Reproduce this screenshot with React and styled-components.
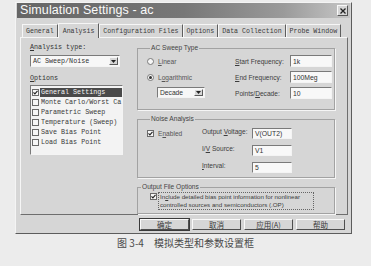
import React from 'react';
import styled, { createGlobalStyle } from 'styled-components';

const GlobalStyle = createGlobalStyle`
  html, body {
    margin: 0;
    padding: 0;
  }
  body {
    width: 371px;
    height: 266px;
    overflow: hidden;
    background: #ececec;
    font-family: "Liberation Sans", Arial, sans-serif;
    color: #2e2e2e;
  }
`;

const Page = styled.div`
  display: flex;
  flex-direction: column;
  align-items: flex-start;
  padding-top: 2px;
`;

const Dialog = styled.div`
  box-sizing: border-box;
  width: 337px;
  margin-left: 15px;
  background: #d6d6d6;
  border: 1px solid;
  border-color: #f4f4f4 #5c5c5c #5c5c5c #f4f4f4;
  display: flex;
  flex-direction: column;
`;

const TitleBar = styled.div`
  height: 15px;
  margin: 0 1px;
  display: flex;
  align-items: center;
  justify-content: space-between;
  padding: 0 2px 0 3px;
  background: linear-gradient(90deg, #666 0%, #777 50%, #9a9a9a 80%, #c6c6c6 100%);
`;

const Title = styled.span`
  color: #fafafa;
  font-size: 12.5px;
  line-height: 15px;
  letter-spacing: 0.1px;
`;

const CloseButton = styled.div`
  box-sizing: border-box;
  width: 11px;
  height: 11px;
  background: #d6d6d6;
  border: 1px solid;
  border-color: #f8f8f8 #555 #555 #f8f8f8;
  display: flex;
  align-items: center;
  justify-content: center;
`;

const TabStrip = styled.div`
  height: 15px;
  margin-top: 4px;
  padding-left: 6px;
  display: flex;
  align-items: flex-end;
  position: relative;
  z-index: 1;
`;

const Tab = styled.div`
  box-sizing: border-box;
  flex: none;
  height: ${p => (p.$active ? 15 : 13)}px;
  margin-bottom: ${p => (p.$active ? -1 : 0)}px;
  padding: 0 ${p => (p.$active ? 4 : 3)}px;
  display: flex;
  align-items: center;
  font-family: "Liberation Mono", "DejaVu Sans Mono", monospace;
  font-size: 6.6px;
  white-space: nowrap;
  color: #3a3a3a;
  background: #d6d6d6;
  border-top: 1px solid #f6f6f6;
  border-left: 1px solid #f6f6f6;
  border-right: 1px solid #5e5e5e;
`;

const Panel = styled.div`
  box-sizing: border-box;
  height: 178px;
  margin: 0 3px 0 4px;
  padding: 5px 0 0 9px;
  border: 1px solid;
  border-color: #f6f6f6 #6e6e6e #6e6e6e #f6f6f6;
  display: grid;
  grid-template-columns: 93px 198px;
  column-gap: 14px;
  align-items: start;
`;

const LeftCol = styled.div`
  display: flex;
  flex-direction: column;
`;

const MonoLabel = styled.div`
  font-family: "Liberation Mono", "DejaVu Sans Mono", monospace;
  font-size: 6.7px;
  line-height: 8px;
  height: 8px;
  margin-top: ${p => p.$gap || 0}px;
  color: #333;
  white-space: nowrap;
`;

const Combo = styled.div`
  box-sizing: border-box;
  width: ${p => p.$w}px;
  height: ${p => p.$h}px;
  margin-top: ${p => p.$gap || 0}px;
  margin-left: ${p => p.$indent || 0}px;
  background: #f7f7f7;
  border: 1px solid;
  border-color: #7a7a7a #f4f4f4 #f4f4f4 #7a7a7a;
  display: flex;
  align-items: center;
  padding: 1px 1px 1px 2px;
`;

const ComboText = styled.span`
  flex: 1;
  font-family: ${p => (p.$mono ? '"Liberation Mono", monospace' : '"Liberation Sans", Arial, sans-serif')};
  font-size: 6.7px;
  color: #333;
  white-space: nowrap;
`;

const DropButton = styled.div`
  box-sizing: border-box;
  width: 9px;
  height: 100%;
  background: #d6d6d6;
  border: 1px solid;
  border-color: #f6f6f6 #5a5a5a #5a5a5a #f6f6f6;
  display: flex;
  align-items: center;
  justify-content: center;
`;

const ListBox = styled.div`
  box-sizing: border-box;
  width: 93px;
  height: 70px;
  margin-top: 3px;
  padding: 1px 0 0 1px;
  background: #f3f3f3;
  border: 1px solid;
  border-color: #7a7a7a #f4f4f4 #f4f4f4 #7a7a7a;
  display: flex;
  flex-direction: column;
  overflow: hidden;
`;

const ListRow = styled.div`
  height: 10px;
  display: flex;
  align-items: center;
  gap: 1px;
`;

const CheckBox = styled.div`
  box-sizing: border-box;
  flex: none;
  width: 7px;
  height: 7px;
  margin-top: ${p => p.$top || 0}px;
  background: #f7f7f7;
  border: 1px solid #6a6a6a;
  display: flex;
  align-items: center;
  justify-content: center;
`;

const ListText = styled.span`
  flex: 1;
  height: 9px;
  line-height: 9px;
  padding-left: 1px;
  font-family: "Liberation Mono", "DejaVu Sans Mono", monospace;
  font-size: 6.7px;
  white-space: nowrap;
  color: ${p => (p.$selected ? '#f4f4f4' : '#3a3a3a')};
  background: ${p => (p.$selected ? '#4a4a4a' : 'transparent')};
`;

const RightCol = styled.div`
  margin-top: 1px;
  display: flex;
  flex-direction: column;
  gap: 5px;
`;

const Group = styled.fieldset`
  box-sizing: border-box;
  height: ${p => p.$h}px;
  margin: 0;
  padding: ${p => p.$pad};
  border: 1px solid #a2a2a2;
  box-shadow: 1px 1px 0 #f5f5f5;
  min-width: 0;
`;

const Legend = styled.legend`
  margin-left: 3px;
  padding: 0 1px;
  font-size: 6.6px;
  line-height: 8px;
  color: #444;
`;

const SweepGrid = styled.div`
  display: grid;
  grid-template-columns: 88px auto;
  grid-auto-rows: 12px;
  row-gap: 4px;
`;

const NoiseGrid = styled.div`
  display: grid;
  grid-template-columns: 55px 50px 40px;
  grid-auto-rows: 11px;
  row-gap: 6px;
`;

const Option = styled.div`
  display: flex;
  align-items: center;
  gap: 4px;
  font-size: 6.6px;
  color: #555;
  white-space: nowrap;
`;

const Radio = styled.div`
  box-sizing: border-box;
  width: 7px;
  height: 7px;
  border-radius: 50%;
  background: #f7f7f7;
  border: 1px solid #7a7a7a;
  display: flex;
  align-items: center;
  justify-content: center;

  &::after {
    content: '';
    width: 3px;
    height: 3px;
    border-radius: 50%;
    background: ${p => (p.$on ? '#333' : 'transparent')};
  }
`;

const FieldRow = styled.div`
  display: flex;
  align-items: center;
`;

const FieldLabel = styled.span`
  width: ${p => p.$w}px;
  font-size: 6.6px;
  color: #3c3c3c;
  white-space: nowrap;
`;

const Input = styled.div`
  box-sizing: border-box;
  width: ${p => p.$w}px;
  height: 100%;
  padding-left: 2px;
  background: #f8f8f8;
  border: 1px solid;
  border-color: #7a7a7a #f4f4f4 #f4f4f4 #7a7a7a;
  display: flex;
  align-items: center;
  font-size: 6.8px;
  color: #333;
  white-space: nowrap;
`;

const OutputRow = styled.div`
  display: flex;
  align-items: flex-start;
  gap: 1px;
  padding-left: 12px;
`;

const FocusText = styled.div`
  box-sizing: border-box;
  width: 156px;
  padding: 0 1px;
  border: 1px dotted #666;
  font-size: 6.2px;
  line-height: 8px;
  color: #3c3c3c;
  white-space: nowrap;
  overflow: hidden;
`;

const ButtonRow = styled.div`
  display: flex;
  justify-content: flex-end;
  gap: 3px;
  margin: 4px 0 3px;
  padding-right: 6px;
`;

const Button = styled.div`
  box-sizing: border-box;
  width: 49px;
  height: 11px;
  background: #d6d6d6;
  border: 1px solid;
  border-color: #fafafa #4e4e4e #4e4e4e #fafafa;
  outline: ${p => (p.$default ? '1px solid #3a3a3a' : 'none')};
  display: flex;
  align-items: center;
  justify-content: center;
  font-family: "Noto Sans CJK SC", "Liberation Sans", sans-serif;
  font-size: 7.5px;
  color: #3a3a3a;
`;

const Caption = styled.div`
  align-self: stretch;
  margin-top: 3px;
  display: flex;
  justify-content: center;
  gap: 10px;
  font-family: "Noto Sans CJK SC", "Liberation Serif", serif;
  font-size: 10px;
  line-height: 12px;
  color: #4a4a4a;
`;

const U = styled.span`
  text-decoration: underline;
`;

const Check = () => (
  <svg width="5" height="5" viewBox="0 0 5 5">
    <polyline points="0.5,2.4 1.9,3.9 4.5,0.8" fill="none" stroke="#222" strokeWidth="1.1" />
  </svg>
);

const Arrow = () => (
  <svg width="5" height="3" viewBox="0 0 5 3">
    <polygon points="0,0 5,0 2.5,3" fill="#222" />
  </svg>
);

const options = [
  { label: 'General Settings', checked: true, selected: true },
  { label: 'Monte Carlo/Worst Ca' },
  { label: 'Parametric Sweep' },
  { label: 'Temperature (Sweep)' },
  { label: 'Save Bias Point' },
  { label: 'Load Bias Point' },
];

const tabs = ['General', 'Analysis', 'Configuration Files', 'Options', 'Data Collection', 'Probe Window'];

export default function App() {
  return (
    <Page>
      <GlobalStyle />
      <Dialog>
        <TitleBar>
          <Title>Simulation Settings - ac</Title>
          <CloseButton>
            <svg width="6" height="6" viewBox="0 0 6 6">
              <path d="M0.5 0.5 L5.5 5.5 M5.5 0.5 L0.5 5.5" stroke="#222" strokeWidth="1.3" />
            </svg>
          </CloseButton>
        </TitleBar>

        <TabStrip>
          {tabs.map(t => (
            <Tab key={t} $active={t === 'Analysis'}>{t}</Tab>
          ))}
        </TabStrip>

        <Panel>
          <LeftCol>
            <MonoLabel><U>A</U>nalysis type:</MonoLabel>
            <Combo $w={90} $h={12} $gap={4}>
              <ComboText $mono>AC Sweep/Noise</ComboText>
              <DropButton><Arrow /></DropButton>
            </Combo>
            <MonoLabel $gap={7}><U>O</U>ptions</MonoLabel>
            <ListBox>
              {options.map(o => (
                <ListRow key={o.label}>
                  <CheckBox>{o.checked && <Check />}</CheckBox>
                  <ListText $selected={o.selected}>{o.label}</ListText>
                </ListRow>
              ))}
            </ListBox>
          </LeftCol>

          <RightCol>
            <Group $h={66} $pad="3px 0 0 9px">
              <Legend>AC Sweep Type</Legend>
              <SweepGrid>
                <Option><Radio /><span><U>L</U>inear</span></Option>
                <FieldRow>
                  <FieldLabel $w={55}><U>S</U>tart Frequency:</FieldLabel>
                  <Input $w={42}>1k</Input>
                </FieldRow>
                <Option><Radio $on /><span>L<U>o</U>garithmic</span></Option>
                <FieldRow>
                  <FieldLabel $w={55}><U>E</U>nd Frequency:</FieldLabel>
                  <Input $w={42}>100Meg</Input>
                </FieldRow>
                <Combo $w={48} $h={11} $indent={10}>
                  <ComboText>Decade</ComboText>
                  <DropButton><Arrow /></DropButton>
                </Combo>
                <FieldRow>
                  <FieldLabel $w={55}>Points/<U>D</U>ecade:</FieldLabel>
                  <Input $w={42}>10</Input>
                </FieldRow>
              </SweepGrid>
            </Group>

            <Group $h={63} $pad="5px 0 0 9px">
              <Legend>Noise Analysis</Legend>
              <NoiseGrid>
                <Option>
                  <CheckBox><Check /></CheckBox>
                  <span>E<U>n</U>abled</span>
                </Option>
                <FieldLabel $w={50}>Output <U>V</U>oltage:</FieldLabel>
                <Input $w={40}>V(OUT2)</Input>
                <span />
                <FieldLabel $w={50}>I/<U>V</U> Source:</FieldLabel>
                <Input $w={40}>V1</Input>
                <span />
                <FieldLabel $w={50}><U>I</U>nterval:</FieldLabel>
                <Input $w={40}>5</Input>
              </NoiseGrid>
            </Group>

            <Group $h={31} $pad="1px 0 0 0">
              <Legend>Output File Options</Legend>
              <OutputRow>
                <CheckBox $top={1}><Check /></CheckBox>
                <FocusText>
                  In<U>c</U>lude detailed bias point information for nonlinear<br />
                  controlled sources and semiconductors (.OP)
                </FocusText>
              </OutputRow>
            </Group>
          </RightCol>
        </Panel>

        <ButtonRow>
          <Button $default>确定</Button>
          <Button>取消</Button>
          <Button>应用(<U>A</U>)</Button>
          <Button>帮助</Button>
        </ButtonRow>
      </Dialog>

      <Caption>
        <span>图 3-4</span>
        <span>模拟类型和参数设置框</span>
      </Caption>
    </Page>
  );
}
